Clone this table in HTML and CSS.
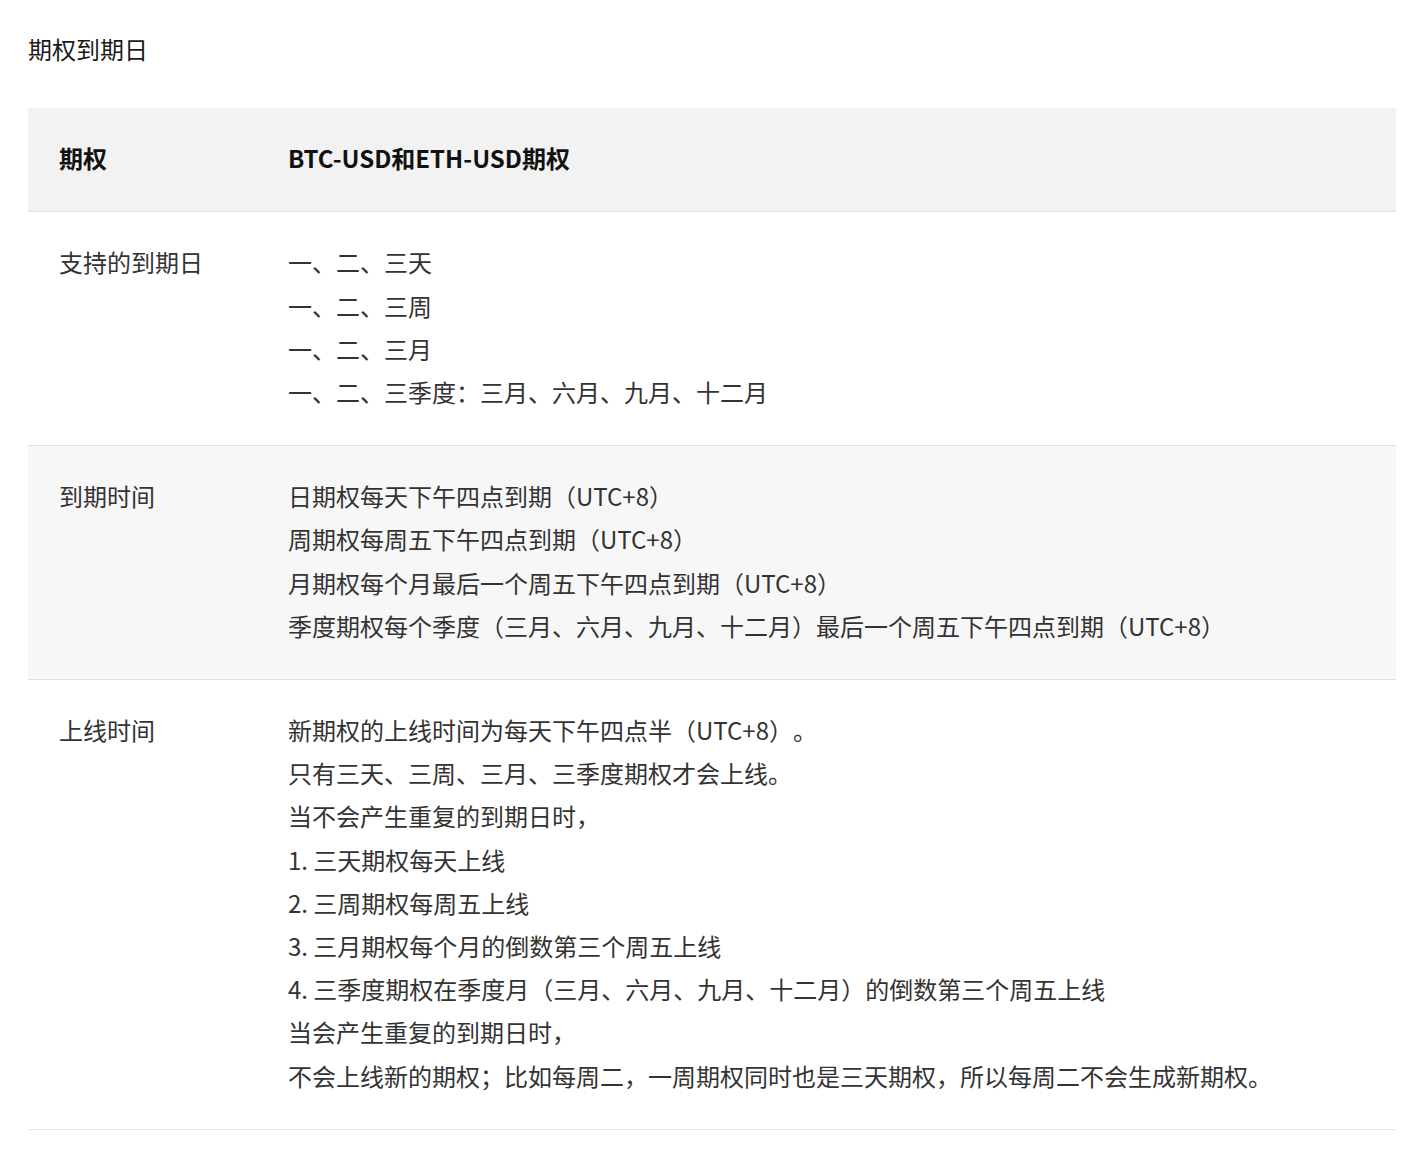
FILE: index.html
```html
<!DOCTYPE html>
<html lang="zh-CN">
<head>
  <meta charset="UTF-8" />
  <title>期权到期日</title>
  <link rel="stylesheet" href="styles.css">
</head>
<body>
  <div class="page">
    <h2 class="page-title">期权到期日</h2>
    <div class="spec-table">
      <div class="spec-row head">
        <div class="cell label">期权</div>
        <div class="cell">BTC-USD和ETH-USD期权</div>
      </div>
      <div class="spec-row">
        <div class="cell label">支持的到期日</div>
        <div class="cell">
          <p>一、二、三天</p>
          <p>一、二、三周</p>
          <p>一、二、三月</p>
          <p>一、二、三季度：三月、六月、九月、十二月</p>
        </div>
      </div>
      <div class="spec-row alt">
        <div class="cell label">到期时间</div>
        <div class="cell">
          <p>日期权每天下午四点到期（UTC+8）</p>
          <p>周期权每周五下午四点到期（UTC+8）</p>
          <p>月期权每个月最后一个周五下午四点到期（UTC+8）</p>
          <p>季度期权每个季度（三月、六月、九月、十二月）最后一个周五下午四点到期（UTC+8）</p>
        </div>
      </div>
      <div class="spec-row">
        <div class="cell label">上线时间</div>
        <div class="cell">
          <p>新期权的上线时间为每天下午四点半（UTC+8）。</p>
          <p>只有三天、三周、三月、三季度期权才会上线。</p>
          <p>当不会产生重复的到期日时，</p>
          <p>1. 三天期权每天上线</p>
          <p>2. 三周期权每周五上线</p>
          <p>3. 三月期权每个月的倒数第三个周五上线</p>
          <p>4. 三季度期权在季度月（三月、六月、九月、十二月）的倒数第三个周五上线</p>
          <p>当会产生重复的到期日时，</p>
          <p>不会上线新的期权；比如每周二，一周期权同时也是三天期权，所以每周二不会生成新期权。</p>
        </div>
      </div>
    </div>
  </div>
</body>
</html>
```

FILE: styles.css
```css
/* 기본 */
* { margin: 0; padding: 0; box-sizing: border-box; }
body { font-family: "Noto Sans CJK SC", sans-serif; color: #333; background-color: #fff; font-size: 24px; line-height: 43.2px; text-spacing-trim: space-all; }
.page { padding: 27px 32px 0 28px; }
.page-title { font-size: 24px; font-weight: 400; color: #1a1a1a; margin-bottom: 38px; }

.spec-row { display: grid; grid-template-columns: 229px 1fr; padding: 28px 31px 32px; border-bottom: 1px solid #e2e2e2; }
.spec-row.head { background-color: #f2f2f2; font-weight: 700; color: #111; }
.spec-row.alt { background-color: #f7f7f7; }
.cell p { margin: 0; }
.label { color: #333; }
.head .label { color: #111; }
```
